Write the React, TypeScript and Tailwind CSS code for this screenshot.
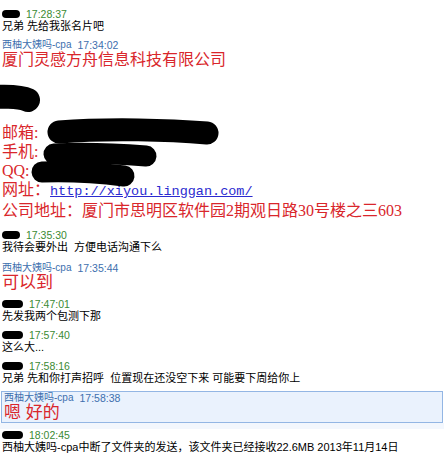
import React from "react";

const SANS = "font-['Liberation_Sans','Noto_Sans_CJK_SC',sans-serif]";
const SERIF = "font-['Liberation_Serif','Noto_Sans_CJK_SC',serif]";

function Blob({ w = 18 }: { w?: number }) {
  return (
    <span
      className="inline-block h-[8px] rounded-full bg-black mr-[6px]"
      style={{ width: w }}
    />
  );
}

function Stamp({ time, w }: { time: string; w?: number }) {
  return (
    <div className="flex items-center h-[12px] leading-[12px] pl-[2px]">
      <Blob w={w} />
      <span className="text-[10.5px] text-[#3b8a33]">{time}</span>
    </div>
  );
}

function Name({ time }: { time: string }) {
  return (
    <div className="flex items-center h-[12px] leading-[12px] pl-[2px] text-[#3d6fae] gap-[6px]">
      <span className="text-[10px]">西柚大姨吗-cpa</span>
      <span className="text-[10.5px]">{time}</span>
    </div>
  );
}

function Msg({ children }: { children: React.ReactNode }) {
  return (
    <div className="pl-[2px] text-[11px] leading-[13px] text-black whitespace-pre">
      {children}
    </div>
  );
}

export default function App() {
  return (
    <div className={`relative w-[444px] h-[463px] bg-white overflow-hidden ${SANS}`}>
      <div className="pt-[8px]">
        <Stamp time="17:28:37" />
        <Msg>兄弟 先给我张名片吧</Msg>
      </div>

      <div className="mt-[6px]">
        <Name time="17:34:02" />
        <div className={`pl-[2px] text-[16px] leading-[17px] text-[#d9262b] ${SERIF}`}>
          厦门灵感方舟信息科技有限公司
        </div>
        <div className={`mt-[55px] pl-[2px] text-[16px] leading-[19px] text-[#d9262b] ${SERIF}`}>
          <div>邮箱:</div>
          <div>手机:</div>
          <div>QQ:</div>
          <div>
            网址：
            <span className="font-['Liberation_Mono',monospace] text-[13.5px] text-[#2b2bd0] underline">
              http://xiyou.linggan.com/
            </span>
          </div>
          <div>公司地址：厦门市思明区软件园2期观日路30号楼之三603</div>
        </div>
      </div>

      <div className="mt-[9px]">
        <Stamp time="17:35:30" />
        <Msg>我待会要外出  方便电话沟通下么</Msg>
      </div>

      <div className="mt-[8px]">
        <Name time="17:35:44" />
        <div className="pl-[2px] text-[17px] leading-[18px] text-[#d9262b]">可以到</div>
      </div>

      <div className="mt-[6px]">
        <Stamp time="17:47:01" w={21} />
        <Msg>先发我两个包测下那</Msg>
      </div>

      <div className="mt-[6px]">
        <Stamp time="17:57:40" w={21} />
        <Msg>这么大...</Msg>
      </div>

      <div className="mt-[6px]">
        <Stamp time="17:58:16" w={21} />
        <Msg>兄弟 先和你打声招呼  位置现在还没空下来 可能要下周给你上</Msg>
      </div>

      <div className="mt-[6px] mx-[1px] border border-[#93b6e4] bg-[#eaf2fd]">
        <Name time="17:58:38" />
        <div className="pl-[2px] text-[17px] leading-[18px] text-[#d9262b]">嗯  好的</div>
      </div>
      <div className="h-[6px] bg-[#f3f7fd]" />

      <div>
        <Stamp time="18:02:45" w={21} />
        <Msg>西柚大姨吗-cpa中断了文件夹的发送，该文件夹已经接收22.6MB 2013年11月14日</Msg>
      </div>

      <svg
        className="absolute left-0 top-0 pointer-events-none"
        width="444"
        height="463"
        viewBox="0 0 444 463"
      >
        <g stroke="#000" strokeLinecap="round" fill="none">
          <path d="M-20 98 C 0 96, 20 96, 28 100" strokeWidth="24" />
          <path d="M59 132 C 110 128, 170 130, 207 133" strokeWidth="23" />
          <path d="M54 154 C 90 152, 120 154, 146 156" strokeWidth="21" />
          <path d="M42 172 C 70 171, 100 173, 124 176" strokeWidth="21" />
        </g>
      </svg>
    </div>
  );
}
